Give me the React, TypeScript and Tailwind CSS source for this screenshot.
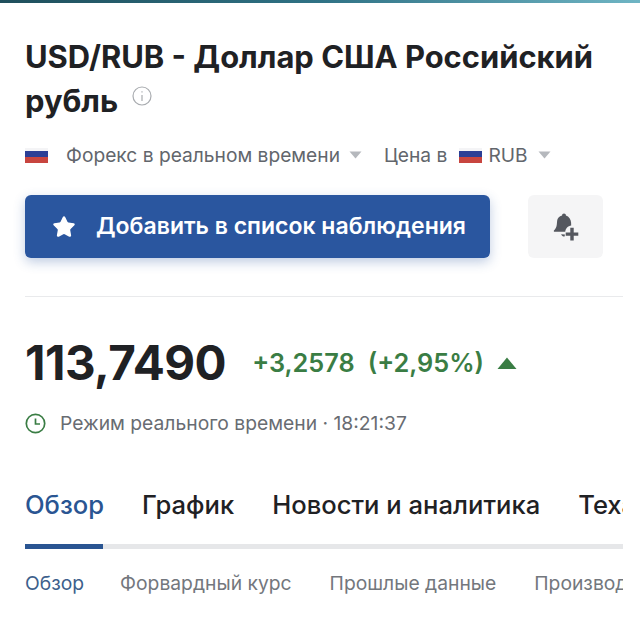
import { Star } from "lucide-react";

function Flag() {
    return (
        <span className="flex flex-col w-[23px] h-[15px] shrink-0">
            <span className="h-[3px] bg-[#f4f4f6]"></span>
            <span className="h-[6px] bg-[#2b3f96]"></span>
            <span className="h-[6px] bg-[#c8453f]"></span>
        </span>
    )
}

function Caret() {
    return (
        <svg width="13" height="8" viewBox="0 0 13 8" className="shrink-0">
            <path d="M0.5 0.5h12L6.5 7.5z" fill="#b5b8bd" />
        </svg>
    )
}

export default function App() {
    return (
        <div className="w-[640px] h-[628px] bg-white overflow-hidden font-['Inter',sans-serif]">
            <div className="h-[3px] bg-gradient-to-r from-[#1f4f5c] via-[#2f7285] to-[#6fb5c4]"></div>

            <div className="pl-[25px] pt-[32px]">
                <h1 className="w-[590px] text-[30.900px] leading-[44px] font-bold text-[#1f2124]">
                    USD/RUB - Доллар США Российский рубль
                    <svg width="20" height="20" viewBox="0 0 20 20" className="inline-block ml-[14px] mb-[16px]" fill="none" stroke="#a9acb0" strokeWidth="1.2">
                        <circle cx="10" cy="10" r="9" />
                        <path d="M10 9v6M10 5.2v1.4" />
                    </svg>
                </h1>

                <div className="flex items-center mt-[20px] h-[24px] text-[19.200px] text-[#62666c]">
                    <Flag />
                    <span className="ml-[18px]">Форекс в реальном времени</span>
                    <span className="ml-[9px]"><Caret /></span>
                    <span className="ml-[22px]">Цена в</span>
                    <span className="ml-[12px]"><Flag /></span>
                    <span className="ml-[6px]">RUB</span>
                    <span className="ml-[10px]"><Caret /></span>
                </div>

                <div className="flex mt-[28px] gap-[38px]">
                    <button className="flex items-center w-[465px] h-[63px] pl-[27px] bg-[#2a569f] rounded-md text-white text-[23px] font-semibold shadow-[0_4px_12px_rgba(42,86,159,0.3)]">
                        <Star size={24} fill="white" strokeWidth={1.5} />
                        <span className="ml-[20px]">Добавить в список наблюдения</span>
                    </button>
                    <div className="flex items-center justify-center w-[75px] h-[63px] bg-[#f5f5f6] rounded-md">
                        <svg width="26" height="28" viewBox="3 2 22.500 24.500" fill="#55585f">
                            <path d="M12.500 2.500c1 0 1.600.7 1.700 1.600 2.700.9 4.300 3.200 4.500 6.200l.1 2.600c-2.800.3-5 2.600-5.200 5.600H4.200c-.6 0-.9-.7-.5-1.100 1.500-1.500 2.300-3.200 2.500-5.300l.3-3.400c.2-2.300 1.800-3.800 4.300-4.600.1-.9.700-1.600 1.700-1.600z" />
                            <path d="M10 20.500c.5 1.400 1.500 2 3 2l.3-1.600z" />
                            <path d="M18 15h3v4h4v3h-4v4h-3v-4h-4v-3h4z" />
                        </svg>
                    </div>
                </div>

                <div className="w-[598px] h-px mt-[38px] bg-[#e9eaec]"></div>

                <div className="flex items-center mt-[33px] h-[66px]">
                    <span className="text-[47.500px] font-bold tracking-[-0.5px] text-[#1f2124]">113,7490</span>
                    <span className="ml-[26px] text-[25.300px] font-semibold text-[#3a7d44]">+3,2578</span>
                    <span className="ml-[13px] text-[25.300px] font-semibold text-[#3a7d44]">(+2,95%)</span>
                    <svg width="20" height="12" viewBox="0 0 20 12" className="ml-[13px]">
                        <path d="M10 0.500L19.500 12H0.500z" fill="#3a7d44" />
                    </svg>
                </div>

                <div className="flex items-center mt-[15px] h-[24px] text-[19.300px] text-[#686c72]">
                    <svg width="21" height="21" viewBox="0 0 21 21" fill="none" stroke="#3a7d44" strokeWidth="1.700">
                        <circle cx="10.500" cy="10.500" r="9.200" />
                        <path d="M10.500 5.500v5.500h4.500" />
                    </svg>
                    <span className="ml-[14px]">Режим реального времени · 18:21:37</span>
                </div>

                <div className="w-[598px] mt-[48px] overflow-hidden">
                    <div className="flex gap-[38px] text-[25.600px] font-medium whitespace-nowrap h-[45px] items-center text-[#1f2124]">
                        <span className="text-[#2a5592]">Обзор</span>
                        <span>График</span>
                        <span>Новости и аналитика</span>
                        <span>Теханализ</span>
                    </div>
                    <div className="h-[5px] mt-[16px] bg-[#e6e7e9]">
                        <div className="w-[78px] h-[5px] bg-[#2a5592]"></div>
                    </div>
                    <div className="flex gap-[38px] mt-[22px] text-[19.300px] whitespace-nowrap h-[24px] items-center text-[#73777d]">
                        <span className="text-[#3d5f8c] mr-[-2px]">Обзор</span>
                        <span>Форвардный курс</span>
                        <span>Прошлые данные</span>
                        <span>Производные</span>
                    </div>
                </div>
            </div>
        </div>
    )
}
